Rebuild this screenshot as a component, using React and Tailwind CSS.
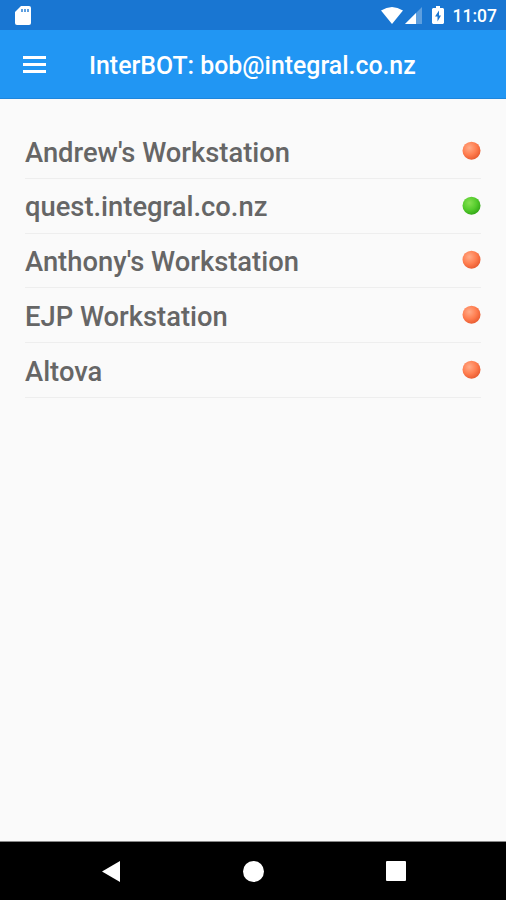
const bots = [
  { name: "Andrew's Workstation", online: false },
  { name: "quest.integral.co.nz", online: true },
  { name: "Anthony's Workstation", online: false },
  { name: "EJP Workstation", online: false },
  { name: "Altova", online: false },
];

function StatusBar() {
  return (
    <div className="flex h-[30px] items-center justify-between bg-[#1976d2] pl-[15px] pr-[9px] text-white">
      <svg width="16" height="19" viewBox="0 0 16 19" fill="currentColor">
        <path d="M6 0h8a2 2 0 0 1 2 2v15a2 2 0 0 1-2 2H2a2 2 0 0 1-2-2V6z" />
        <path d="M6 3h2v3H6zM9 3h2v3H9zM12 3h2v3h-2z" fill="#1976d2" opacity=".7" />
      </svg>
      <div className="flex items-center">
        <svg width="22" height="17" viewBox="0 0 22 17" fill="currentColor">
          <path d="M0 3.6Q11-3.6 22 3.6L11 17z" />
        </svg>
        <svg className="ml-[2px]" width="17" height="17" viewBox="0 0 17 17" fill="currentColor">
          <path d="M17 0v17H0z" opacity=".3" />
          <path d="M11 6v11H0z" />
        </svg>
        <svg className="ml-[10px]" width="12" height="18" viewBox="0 0 12 18" fill="currentColor">
          <path fillRule="evenodd" d="M4 0h4v2h3l1 1v14l-1 1H1l-1-1V3l1-1h3zM7 4.5l-4 6h2.5v5l3.5-6H7z" />
        </svg>
        <span className="ml-[9px] mt-[2px] text-[17.5px] font-medium">11:07</span>
      </div>
    </div>
  );
}

function StatusLight({ online }) {
  const id = online ? "online" : "offline";
  return (
    <svg width="20" height="20" viewBox="0 0 20 20">
      <defs>
        <radialGradient id={id} cx=".38" cy=".34" r=".72">
          <stop offset="0" stopColor={online ? "#86e052" : "#ffab88"} />
          <stop offset=".55" stopColor={online ? "#55cc2d" : "#ff7e50"} />
          <stop offset="1" stopColor={online ? "#2fa315" : "#e6582e"} />
        </radialGradient>
      </defs>
      <circle cx="10.5" cy="9.7" r="9" fill={`url(#${id})`} />
    </svg>
  );
}

export default function App() {
  return (
    <div className="flex h-[900px] w-[506px] flex-col bg-[#fafafa] font-['Roboto',sans-serif]">
      <StatusBar />
      <header className="flex h-[69px] items-center border-b border-[#1e86dc] bg-[#2196f3] pl-[23px] text-white">
        <svg width="23" height="17" viewBox="0 0 23 17" fill="currentColor">
          <path d="M0 0h23v3H0zM0 7h23v3H0zM0 14h23v3H0z" />
        </svg>
        <h1 className="ml-[43px] mt-[3px] text-[24.85px] font-medium">InterBOT: bob@integral.co.nz</h1>
      </header>
      <main className="flex-1 px-[25px] pt-[25px]">
        {bots.map((bot) => (
          <div key={bot.name} className="flex h-[54.8px] items-center justify-between border-b border-[#eeeeee]">
            <span className="mt-[4.6px] text-[27.35px] font-medium text-[#666666]">{bot.name}</span>
            <StatusLight online={bot.online} />
          </div>
        ))}
      </main>
      <nav className="flex h-[59px] items-center border-t border-[#888888] bg-black pl-[102px] text-white">
        <svg width="18" height="21" viewBox="0 0 18 21" fill="currentColor">
          <path d="M18 0v21L0 10.5z" />
        </svg>
        <div className="ml-[123px] size-[21px] rounded-full bg-white" />
        <div className="ml-[122px] size-[20px] rounded-[1px] bg-white" />
      </nav>
    </div>
  );
}
